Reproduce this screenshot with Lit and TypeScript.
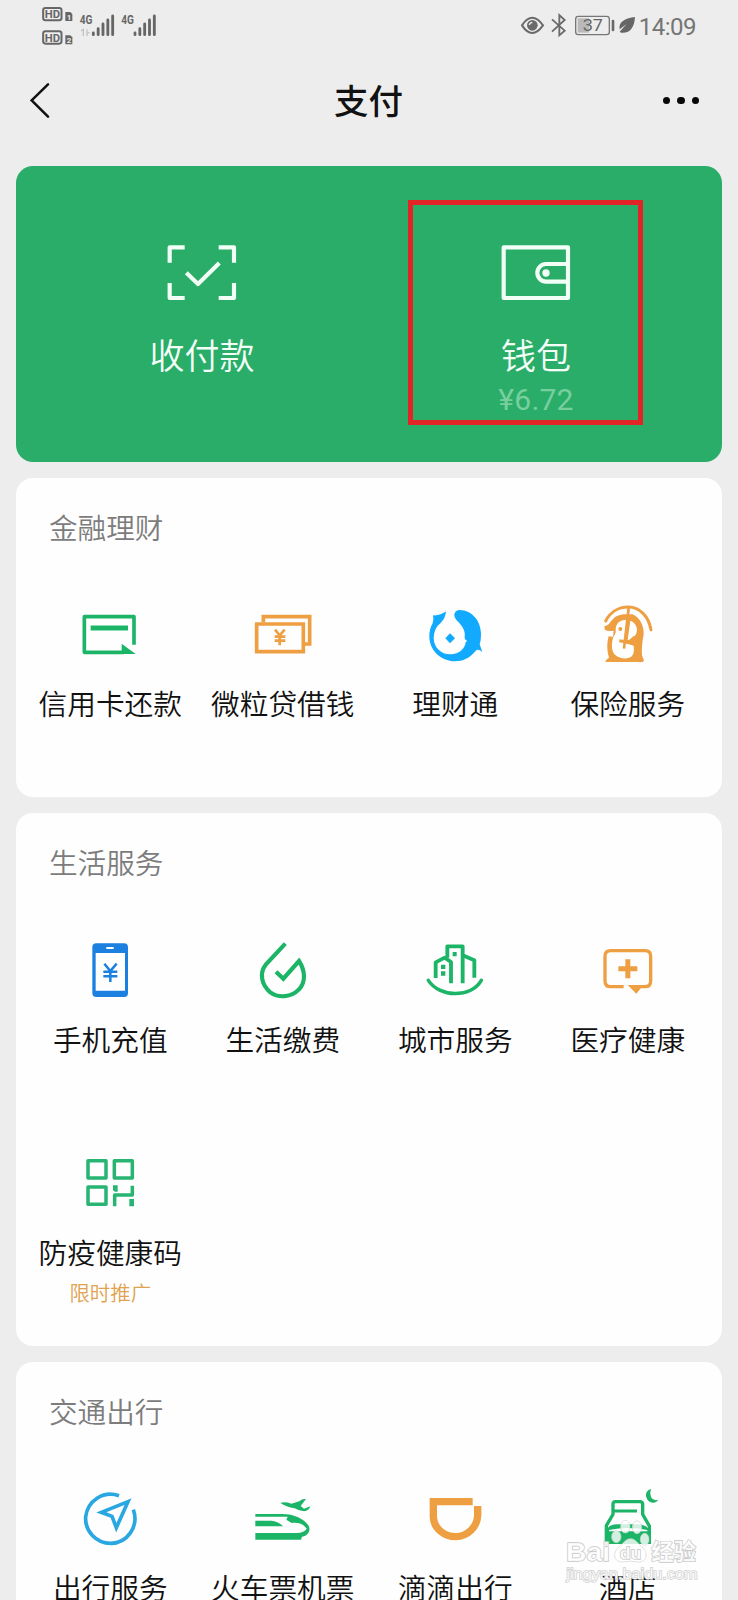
import { LitElement, html, css, svg, type SVGTemplateResult } from "lit";
import { customElement, property } from "lit/decorators.js";

const GREEN = "#1cb568";
const ORANGE = "#ee9f42";

interface Icon {
  box: string;
  art: SVGTemplateResult;
}

// Service icons share one drawing scale: three units to the pixel.
const icons: Record<string, Icon> = {
  card: {
    box: "241 405 180 180",
    art: svg`<g fill="none" stroke=${GREEN}>
        <path d="M403 524V440H254V547H372" stroke-width="11" stroke-linejoin="round"/>
        <path d="M273 474H385" stroke-width="15"/></g>
      <path d="M366 521L408 552H366Z" fill=${GREEN}/>`,
  },
  loan: {
    box: "758 405 180 180",
    art: svg`<g fill="none" stroke=${ORANGE} stroke-width="11">
        <path d="M769 462H909V545H769Z"/>
        <path d="M789 457V440H928V522H914"/></g>
      <path d="M824 479L838 496L853 479M838 496V526M823 500H855M823 512H855" fill="none" stroke=${ORANGE} stroke-width="8"/>`,
  },
  fortune: {
    box: "169 405 180 180",
    art: svg`<g fill="#12aaff">
        <path d="M193 436Q214 438 232 424Q231 444 216 459Q196 474 195 503C195 531 216 553 245 553C272 552 290 535 291 516L296 513Q287 509 288 500C291 482 281 468 266 453C250 436 257 421 273 420C311 421 336 453 337 490Q337 512 333 523L341 546Q329 536 323 541C302 566 283 574 259 574C216 573 182 541 182 498Q182 477 192 460Q196 449 193 436Z"/>
        <path d="M244 490L259 505L244 520L230 505Z"/></g>`,
  },
  insurance: {
    box: "686 405 180 180",
    art: svg`<path d="M709 453C724 423 752 411 777 411C811 411 838 439 845 479" fill="none" stroke=${ORANGE} stroke-width="9" stroke-linecap="round"/>
      <path d="M705 468C719 467 722 455 732 446C744 434 760 433 777 433H789C811 441 824 466 823 493Q816 530 818 556L824 572Q819 578 805 576H709Q707 570 719 563C711 535 714 514 718 499L731 500L733 482Q718 484 707 480Z" fill=${ORANGE}/>
      <path d="M774 449C752 448 738 460 739 482C740 491 735 494 731 503C725 527 727 545 738 555C750 566 777 570 788 558Q796 547 793 527L769 520Z" fill="#fff"/>
      <path d="M783 452C803 459 808 482 797 497C791 505 784 509 775 510Z" fill="#fff"/>
      <path d="M778 414L764 536" fill="none" stroke=${ORANGE} stroke-width="8"/>
      <path d="M788 424L818 446" fill="none" stroke="#fff" stroke-width="7"/>
      <path d="M750 512L778 517L797 501" fill="none" stroke=${ORANGE} stroke-width="9"/>
      <circle cx="753" cy="477" r="6" fill=${ORANGE}/>`,
  },
  phone: {
    box: "241 392 180 180",
    art: svg`<rect x="278" y="399" width="107" height="161" rx="12" fill="#1b80df"/>
      <path d="M288 428H376V541H288Z" fill="#fff"/>
      <path d="M320 413H342" stroke="#fff" stroke-width="6"/>
      <path d="M314 460L332 482L351 460M332 482V515M311 484H353M311 498H353" fill="none" stroke="#1b80df" stroke-width="7.5"/>`,
  },
  bills: {
    box: "758 392 180 180",
    art: svg`<path d="M855 400L797 462C774 490 786 526 810 546C835 564 873 561 895 538C918 515 914 480 896 452L849 505L827 484" fill="none" stroke=${GREEN} stroke-width="12.5"/>`,
  },
  city: {
    box: "169 392 180 180",
    art: svg`<g fill="none" stroke=${GREEN} stroke-width="11.5" stroke-linejoin="round">
        <path d="M201 503V456L228 442L247 455V519"/>
        <path d="M236 442V408H282V519" />
        <path d="M282 435L317 450V502"/>
        <path d="M179 510C212 561 306 565 338 510" stroke-width="10.5" stroke-linecap="round"/></g>
      <path d="M252 425H264V438H252ZM217 463H230V476H217ZM217 483H230V496H217Z" fill=${GREEN}/>`,
  },
  medical: {
    box: "686 392 180 180",
    art: svg`<path d="M763 529H724Q707 529 707 512V438Q707 421 724 421H827Q844 421 844 438V512Q844 529 827 529H808" fill="none" stroke=${ORANGE} stroke-width="10"/>
      <path d="M775 524H822L801 550Z" fill=${ORANGE}/>
      <path d="M747 475H804M775.500 447V504" stroke=${ORANGE} stroke-width="15"/>`,
  },
  health: {
    box: "241 71 180 180",
    art: svg`<g fill="none" stroke="#28b473" stroke-width="10.500" stroke-linejoin="round">
        <path d="M265 91H319V143H265ZM344 91H398V143H344ZM265 170H319V222H265Z"/>
        <path d="M345 228V194H398V166" /></g>
      <path d="M340 165H354V184H346L340 180ZM389 206H403V228H389Z" fill="#28b473"/>`,
  },
  travel: {
    box: "241 177 180 180",
    art: svg`<g fill="none" stroke="#29a7e1" stroke-width="11">
        <path d="M358 194C310 178 264 209 258 257C255 301 290 337 333 337C382 337 419 287 401 236"/>
        <path d="M385 212L305 244L337 256L350 290Z" stroke-width="11"/></g>`,
  },
  train: {
    box: "758 177 180 180",
    art: svg`<g fill=${GREEN}>
        <path d="M840 216Q854 211 873 218L897 211Q904 203 917 204L901 225L911 233L930 226Q926 240 911 241Q896 240 883 232Q857 228 840 216Z"/>
        <path d="M765 249H842C881 248 910 263 924 283Q931 295 924 305Q918 315 905 317L902 326H765V306H888Q913 305 919 293C909 278 892 273 874 276L858 266L862 257H765Z"/>
        <path d="M765 269H812Q833 270 848 286H765Z"/></g>`,
  },
  didi: {
    box: "169 177 180 180",
    art: svg`<path d="M312 212H194V259C196 293 227 317 261 317C296 316 326 288 327 254V225" fill="none" stroke=${ORANGE} stroke-width="22"/>`,
  },
  hotel: {
    box: "686 177 180 180",
    art: svg`<g fill="none" stroke=${GREEN} stroke-width="10">
        <path d="M711 339V284L731 250V218Q732 212 739 212H812Q819 212 820 219V250L840 285V339"/>
        <path d="M731 240H803" stroke-width="9"/></g>
      <path d="M711 301C715 284 729 280 750 280H801C823 280 836 286 840 301V339H711Z" fill=${GREEN}/>
      <path d="M719 297Q778 285 834 297V301H719Z" fill="#fff"/>
      <path d="M845 174Q828 179 830 196Q835 216 853 215Q862 214 867 206Q852 211 845 199Q840 187 845 174Z" fill=${GREEN}/>`,
  },
};

interface Service {
  icon: string;
  name: string;
  note?: string;
}

interface Section {
  title: string;
  items: Service[];
}

const sections: Section[] = [
  {
    title: "金融理财",
    items: [
      { icon: "card", name: "信用卡还款" },
      { icon: "loan", name: "微粒贷借钱" },
      { icon: "fortune", name: "理财通" },
      { icon: "insurance", name: "保险服务" },
    ],
  },
  {
    title: "生活服务",
    items: [
      { icon: "phone", name: "手机充值" },
      { icon: "bills", name: "生活缴费" },
      { icon: "city", name: "城市服务" },
      { icon: "medical", name: "医疗健康" },
      { icon: "health", name: "防疫健康码", note: "限时推广" },
    ],
  },
  {
    title: "交通出行",
    items: [
      { icon: "travel", name: "出行服务" },
      { icon: "train", name: "火车票机票" },
      { icon: "didi", name: "滴滴出行" },
      { icon: "hotel", name: "酒店" },
    ],
  },
];

@customElement("status-bar")
export class StatusBar extends LitElement {
  static styles = css`
    :host {
      display: flex;
      justify-content: space-between;
      height: 50px;
      padding: 0 42px 0 40px;
      box-sizing: border-box;
    }
    .signals {
      display: block;
      width: 120px;
      height: 50px;
    }
    .right {
      display: flex;
      align-items: flex-start;
    }
    .indicators {
      display: block;
      width: 119px;
      height: 50px;
    }
    .clock {
      font: 400 24px/30px Roboto, sans-serif;
      letter-spacing: -0.5px;
      color: #757575;
      margin-top: 12px;
    }
    .label {
      font-family: Roboto, sans-serif;
      font-weight: 700;
    }
    .level {
      font-family: Roboto, sans-serif;
      font-weight: 400;
    }
  `;

  render() {
    return html`
      <svg class="signals" viewBox="120 0 360 150">
        ${[0, 70].map(
          (dy, i) => svg`
            <rect x="129.500" y=${24 + dy} width="55" height="37" rx="7" fill="#eee" stroke="#666" stroke-width="6"/>
            <text class="label" x="134" y=${55 + dy} font-size="35" textLength="46" lengthAdjust="spacingAndGlyphs" fill="#666">HD</text>
            <path d="M196 ${36 + dy}H211L217 ${42 + dy}V${63 + dy}H196Z" fill="#666"/>
            <text class="label" x="200" y=${59 + dy} font-size="24" fill="#eee">${i + 1}</text>`
        )}
        <text class="label" x="239" y="73" font-size="38" textLength="38" lengthAdjust="spacingAndGlyphs" fill="#666">4G</text>
        <text class="label" x="364" y="73" font-size="38" textLength="38" lengthAdjust="spacingAndGlyphs" fill="#666">4G</text>
        <path d="M243 93L250 88V108M261 88V108M261 98H269" fill="none" stroke="#c4c4c4" stroke-width="4"/>
        ${[0, 125].map(
          (dx) => svg`
            <path d="M${280 + dx} 99V104M${294.5 + dx} 86V104M${309 + dx} 72V104M${323.5 + dx} 60V104M${338 + dx} 48V104"
              fill="none" stroke="#666" stroke-width="8.5" stroke-linecap="round"/>`
        )}
      </svg>
      <div class="right">
        <svg class="indicators" viewBox="450 0 357 150">
          <path d="M456 76Q486 31 519 76Q486 122 456 76Z" fill="none" stroke="#6a6a6a" stroke-width="6"/>
          <circle cx="487" cy="76" r="16" fill="#6a6a6a"/>
          <path d="M478 75Q479 68 487 67" fill="none" stroke="#eee" stroke-width="4"/>
          <path d="M546 58L584 92L568 106V45L584 60L546 95" fill="none" stroke="#6a6a6a" stroke-width="5.500"/>
          <rect x="617" y="49" width="101" height="55" rx="8" fill="none" stroke="#777" stroke-width="4"/>
          <rect x="623" y="55" width="34" height="43" fill="#b9b9b9"/>
          <text class="level" x="638" y="94" font-size="50" textLength="61" lengthAdjust="spacingAndGlyphs" fill="#666">37</text>
          <path d="M729 63V90" stroke="#6a6a6a" stroke-width="8" stroke-linecap="round"/>
          <path d="M795 51C768 54 744 65 749 88L769 73L749 95L753 98C780 101 793 83 795 51Z" fill="#666"/>
        </svg>
        <span class="clock">14:09</span>
      </div>
    `;
  }
}

@customElement("nav-header")
export class NavHeader extends LitElement {
  static styles = css`
    :host {
      display: grid;
      grid-template-columns: 1fr auto 1fr;
      align-items: center;
      height: 100px;
      padding: 0 39px 0 30px;
    }
    .back {
      width: 20px;
      height: 36px;
    }
    .title {
      font-size: 34.5px;
      font-weight: 500;
      line-height: 50px;
      color: #111;
      margin: 0 0 2px 8px;
    }
    .more {
      display: flex;
      justify-content: flex-end;
      gap: 7px;
      padding-top: 1px;
    }
    .dot {
      width: 7.5px;
      height: 7.5px;
      border-radius: 50%;
      background: #080808;
    }
  `;

  render() {
    return html`
      <svg class="back" viewBox="90 246 60 108">
        <path d="M144 253L95 301L144 350" fill="none" stroke="#111" stroke-width="7.5" stroke-linecap="round"/>
      </svg>
      <span class="title">支付</span>
      <div class="more">
        <span class="dot"></span><span class="dot"></span><span class="dot"></span>
      </div>
    `;
  }
}

@customElement("pay-panel")
export class PayPanel extends LitElement {
  static styles = css`
    :host {
      display: grid;
      grid-template-columns: 1fr 1fr;
      height: 295.7px;
      box-sizing: border-box;
      padding: 74px 19px 0;
      border-radius: 17px;
      background: #2aad69;
      position: relative;
    }
    .entry {
      display: flex;
      flex-direction: column;
      align-items: center;
      color: #f4fff8;
    }
    .glyph {
      width: 80px;
      height: 65px;
    }
    .name {
      margin-top: 23.5px;
      font-size: 35px;
      line-height: 50px;
      font-weight: 350;
    }
    .balance {
      font: 400 30px/36px Roboto, sans-serif;
      color: #78cf9e;
      margin-top: 3px;
      letter-spacing: 0.2px;
    }
    .marker {
      position: absolute;
      left: 392px;
      top: 34px;
      width: 235px;
      height: 225px;
      box-sizing: border-box;
      border: 5.5px solid #e32427;
    }
  `;

  render() {
    return html`
      <div class="entry">
        <svg class="glyph" viewBox="487 270 240 195">
          <g fill="none" stroke="#f2fff7" stroke-width="12.5" stroke-linejoin="round">
            <path d="M555 292H510V338M657 292H703V338M510 399V444H555M703 399V444H657"/>
            <path d="M560 368L595 402L659 339"/>
          </g>
        </svg>
        <span class="name">收付款</span>
      </div>
      <div class="entry">
        <svg class="glyph" viewBox="381 270 240 195">
          <g fill="none" stroke="#f2fff7" stroke-width="12.5" stroke-linejoin="round">
            <path d="M404 292H597V444H404Z"/>
            <path d="M597 342H531A26 26.500 0 0 0 531 395H597"/>
          </g>
          <circle cx="531" cy="369" r="11" fill="#f2fff7"/>
        </svg>
        <span class="name">钱包</span>
        <span class="balance">¥6.72</span>
      </div>
      <div class="marker"></div>
    `;
  }
}

@customElement("service-card")
export class ServiceCard extends LitElement {
  @property({ attribute: false }) section!: Section;

  static styles = css`
    :host {
      display: block;
      border-radius: 17px;
      background: #fefefe;
    }
    .heading {
      height: 106.7px;
      box-sizing: border-box;
      padding: 29px 33px 0;
      font-size: 28.6px;
      line-height: 40px;
      font-weight: 350;
      color: #7c7c7c;
    }
    .grid {
      display: grid;
      grid-template-columns: repeat(4, 1fr);
      grid-auto-rows: 213px;
      padding: 0 8px;
    }
    .item {
      display: flex;
      flex-direction: column;
      align-items: center;
      padding-top: 20.8px;
      white-space: nowrap;
    }
    .icon {
      width: 60px;
      height: 60px;
      overflow: visible;
      flex: none;
    }
    .name {
      margin-top: 17.7px;
      font-size: 28.7px;
      line-height: 40px;
      font-weight: 350;
      color: #111;
    }
    .note {
      margin-top: 6.7px;
      font-size: 20.4px;
      line-height: 28px;
      font-weight: 350;
      color: #dfa24e;
    }
  `;

  render() {
    return html`
      <div class="heading">${this.section.title}</div>
      <div class="grid">
        ${this.section.items.map(
          (item) => html`
            <div class="item">
              <svg class="icon" viewBox=${icons[item.icon].box}>${icons[item.icon].art}</svg>
              <span class="name">${item.name}</span>
              ${item.note ? html`<span class="note">${item.note}</span>` : null}
            </div>
          `
        )}
      </div>
    `;
  }
}

@customElement("app-root")
export class AppRoot extends LitElement {
  static styles = css`
    :host {
      display: block;
      position: relative;
      height: 1600px;
      overflow: hidden;
      background: #ededed;
      font-family: "Noto Sans CJK SC", sans-serif;
    }
    .content {
      display: flex;
      flex-direction: column;
      gap: 16px;
      padding: 16px 16px 0;
    }
    .watermark {
      position: absolute;
      left: 562px;
      top: 1516px;
      width: 140px;
      height: 72px;
    }
    .mark {
      font-family: "Liberation Sans", "Noto Sans CJK SC", sans-serif;
      font-weight: 700;
      fill: #fff;
      fill-opacity: 0.85;
      stroke: #c8c8c8;
      stroke-width: 4px;
      paint-order: stroke;
    }
    .site {
      font-family: "Liberation Sans", sans-serif;
      fill: #fff;
      fill-opacity: 0.85;
      stroke: #d0d0d0;
      stroke-width: 4px;
      paint-order: stroke;
    }
  `;

  render() {
    return html`
      <status-bar></status-bar>
      <nav-header></nav-header>
      <main class="content">
        <pay-panel></pay-panel>
        ${sections.map((section) => html`<service-card .section=${section}></service-card>`)}
      </main>
      <svg class="watermark" viewBox="579 258 420 216">
        <g fill="#fff" fill-opacity="0.8" stroke="#d2d2d2" stroke-width="2">
          <ellipse cx="742" cy="320" rx="14" ry="18"/>
          <ellipse cx="769" cy="290" rx="14" ry="19"/>
          <ellipse cx="804" cy="292" rx="14" ry="19"/>
          <ellipse cx="827" cy="328" rx="13" ry="18"/>
          <path d="M785 326C799 326 806 340 818 350C840 368 834 397 808 396Q785 391 763 396C735 397 728 370 749 352C763 341 769 326 785 326Z"/>
        </g>
        <text class="mark" x="591" y="393" font-size="80" textLength="132" lengthAdjust="spacingAndGlyphs">Bai</text>
        <text class="mark" x="752" y="387" font-size="52" textLength="65" lengthAdjust="spacingAndGlyphs">du</text>
        <text class="mark" x="847" y="390" font-size="67" textLength="134" lengthAdjust="spacingAndGlyphs">经验</text>
        <text class="site" x="592" y="446" font-size="44" textLength="394" lengthAdjust="spacingAndGlyphs">jingyan.baidu.com</text>
      </svg>
    `;
  }
}
